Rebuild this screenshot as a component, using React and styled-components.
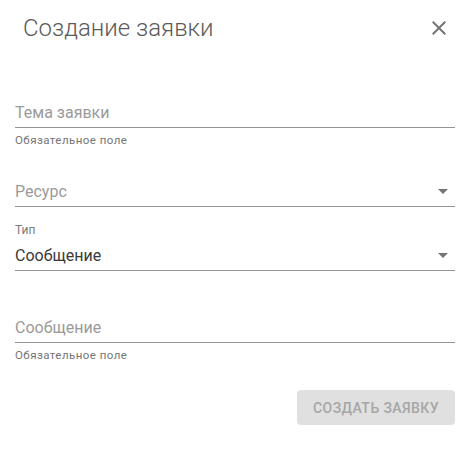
import React from 'react';
import styled, { createGlobalStyle } from 'styled-components';

const GlobalStyle = createGlobalStyle`
    body{
        margin:0;
        background:#fff;
        font-family:Roboto, "Liberation Sans", sans-serif;
    }
`

const CloseIcon = () => (
    <svg width="24" height="24" viewBox="0 0 24 24" fill="#757575">
        <path d="M19 6.41L17.59 5 12 10.59 6.41 5 5 6.41 10.59 12 5 17.59 6.41 19 12 13.41 17.59 19 19 17.59 13.41 12z"/>
    </svg>
)

const ArrowDropDown = () => (
    <svg width="24" height="24" viewBox="0 0 24 24" fill="#757575">
        <path d="M7 10l5 5 5-5z"/>
    </svg>
)

const TextField = ({label, value, placeholder, helper, select, top}) => (
    <Field $top={top}>
        {label && <SmallLabel>{label}</SmallLabel>}
        <InputRow>
            <InputText $filled={!!value}>{value || placeholder}</InputText>
            {select && <ArrowDropDown/>}
        </InputRow>
        {helper && <Helper>{helper}</Helper>}
    </Field>
)

const App = () => {
    return(
        <Dialog>
            <GlobalStyle/>
            <Header>
                <Title>Создание заявки</Title>
                <CloseButton><CloseIcon/></CloseButton>
            </Header>
            <Form>
                <TextField top={52} placeholder="Тема заявки" helper="Обязательное поле"/>
                <TextField top={28} placeholder="Ресурс" select/>
                <TextField top={16} label="Тип" value="Сообщение" select/>
                <TextField top={40} placeholder="Сообщение" helper="Обязательное поле"/>
            </Form>
            <Actions>
                <SubmitButton disabled>Создать заявку</SubmitButton>
            </Actions>
        </Dialog>
    )
}

const Dialog = styled.div`
    width:440px;
    padding:0 16px 0 15px;
`
const Header = styled.div`
    display:flex;
    align-items:center;
    justify-content:space-between;
    height:32px;
    padding:12px 4px 0 8px;
`
const Title = styled.h2`
    margin:0;
    font-size:24px;
    line-height:32px;
    font-weight:300;
    color:#5a5a5a;
`
const CloseButton = styled.div`
    display:flex;
    width:24px;
    height:24px;
`
const Form = styled.div`
    display:flex;
    flex-direction:column;
`
const Field = styled.div`
    margin-top:${p => p.$top}px;
`
const SmallLabel = styled.div`
    font-size:12px;
    line-height:14px;
    color:#7a7a7a;
    margin-bottom:2px;
`
const InputRow = styled.div`
    display:flex;
    align-items:center;
    justify-content:space-between;
    height:31px;
    border-bottom:1px solid #949494;
`
const InputText = styled.span`
    font-size:16px;
    line-height:19px;
    padding-top:2px;
    color:${p => p.$filled ? '#3a3a3a' : '#9a9a9a'};
`
const Helper = styled.div`
    margin-top:5px;
    font-size:11.5px;
    line-height:14px;
    color:#757575;
    letter-spacing:0.45px;
`
const Actions = styled.div`
    display:flex;
    justify-content:flex-end;
    margin-top:28px;
`
const SubmitButton = styled.button`
    height:35px;
    width:158px;
    border:none;
    border-radius:4px;
    background:#e0e0e0;
    color:#a6a6a6;
    font-family:Roboto, "Liberation Sans", sans-serif;
    font-size:14px;
    font-weight:500;
    letter-spacing:0.4px;
    text-transform:uppercase;
`

export default App;
